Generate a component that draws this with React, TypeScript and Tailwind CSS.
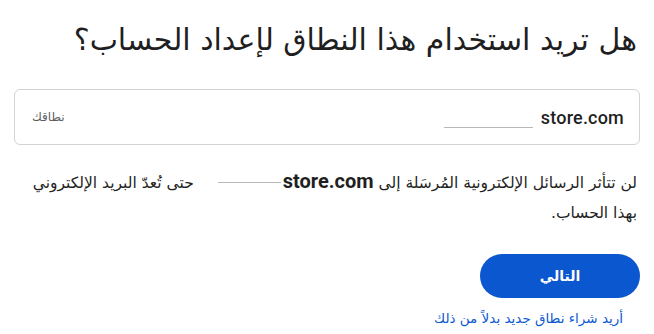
export default function App() {
  const arabic = { fontFamily: '"DejaVu Sans", "Liberation Sans", sans-serif' };
  return (
    <div
      dir="rtl"
      className="min-h-screen w-full bg-white px-[14px] pt-[16px] text-[#1f1f1f]"
      style={arabic}
    >
      <h1 className="pr-[3px] text-[30px] leading-[48px] font-normal tracking-tight">
        هل تريد استخدام هذا النطاق لإعداد الحساب؟
      </h1>

      <div className="mt-[25px] flex h-[56px] items-center justify-between rounded-md border border-[#d3d3d3] pr-[15px] pl-[17px]">
        <div dir="ltr" className="flex items-end gap-[8px]">
          <span className="mb-[3px] block h-px w-[89px] bg-[#b8b8b8]" />
          <span className="font-['Roboto',sans-serif] text-[18px] font-medium tracking-[0.2px]">store.com</span>
        </div>
        <span className="text-[12px] text-[#5e5e5e]">نطاقك</span>
      </div>

      <p className="mt-[21px] pr-[3px] pl-[18px] text-[15.5px] leading-[30px]">
        لن تتأثر الرسائل الإلكترونية المُرسَلة إلى{" "}
        <span dir="ltr" className="whitespace-nowrap">
          <span className="mr-[2px] inline-block h-[1px] w-[63px] translate-y-[-5px] bg-[#b8b8b8] align-baseline" />
          <span className="font-['Roboto',sans-serif] text-[20px] font-bold">store.com</span>
        </span>
        <span className="inline-block w-[24px]" />
        حتى تُعدّ البريد الإلكتروني بهذا الحساب.
      </p>

      <div className="mt-[26px] flex flex-col items-start">
        <button className="flex h-[44px] w-[160px] items-center justify-center rounded-full bg-[#0b57d0] text-[14px] font-bold text-white">
          التالي
        </button>
        <a className="mt-[10px] mr-[17px] text-[13.5px] text-[#0b57d0]">
          أريد شراء نطاق جديد بدلاً من ذلك
        </a>
      </div>
    </div>
  );
}
